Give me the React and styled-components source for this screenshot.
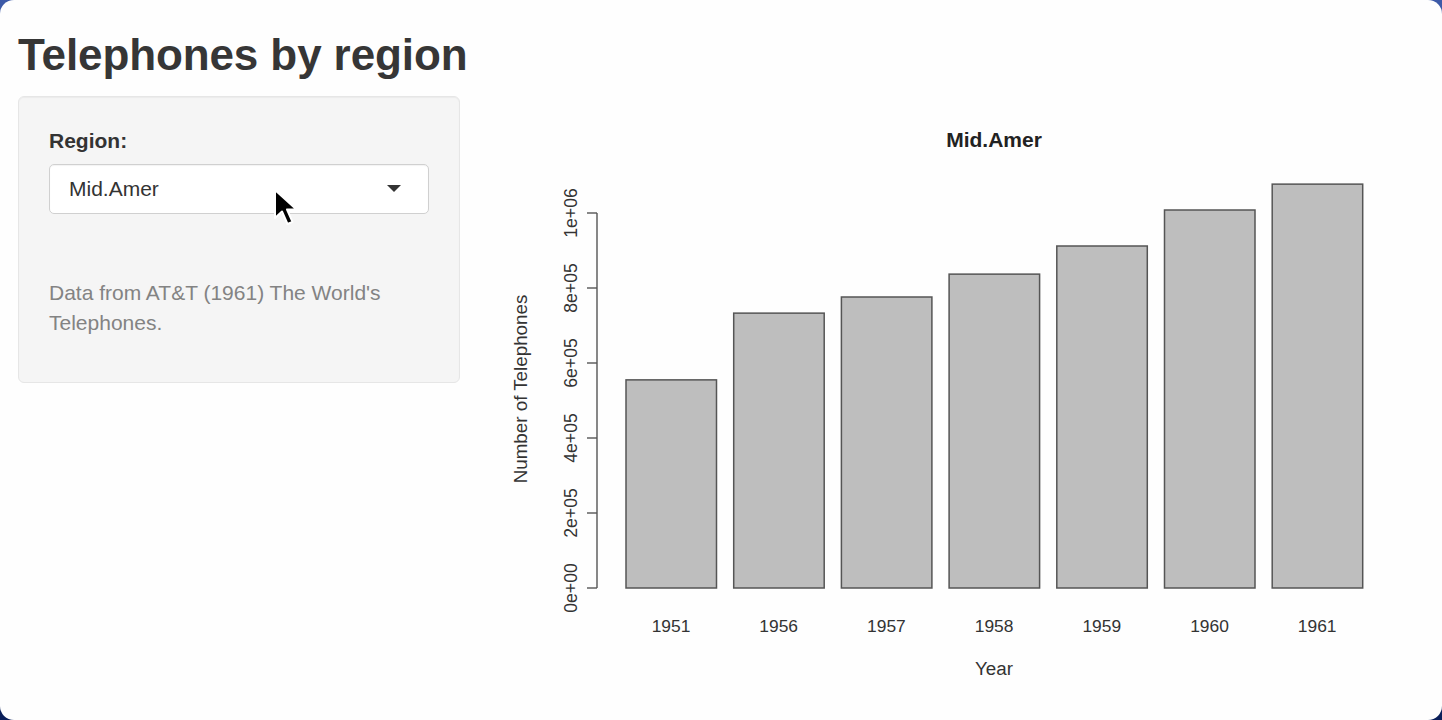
import React from "react";
import styled, { createGlobalStyle } from "styled-components";

const GlobalStyle = createGlobalStyle`
  html, body {
    margin: 0;
    padding: 0;
    background: linear-gradient(180deg, #3d5aa8 0%, #16306f 60%, #0a1f5a 100%);
  }
  body {
    font-family: "Liberation Sans", Arial, sans-serif;
    color: #333;
  }
`;

const Window = styled.div`
  width: 1442px;
  height: 720px;
  box-sizing: border-box;
  background: #fefefe;
  border-radius: 14px;
  padding: 30px 0 0 18px;
  position: relative;
  overflow: hidden;
`;

const Title = styled.h1`
  margin: 0;
  font-size: 44px;
  line-height: 50px;
  font-weight: bold;
  color: #363636;
  letter-spacing: -0.1px;
`;

const Row = styled.div`
  display: flex;
  align-items: flex-start;
  margin-top: 16px;
  gap: 20px;
`;

const Well = styled.div`
  width: 442px;
  height: 287px;
  box-sizing: border-box;
  padding: 29px 30px;
  background: #f5f5f5;
  border: 1px solid #e6e6e6;
  border-radius: 6px;
  box-shadow: inset 0 1px 1px rgba(0, 0, 0, 0.04);
`;

const Label = styled.label`
  display: block;
  font-size: 21px;
  line-height: 30px;
  font-weight: bold;
  color: #333;
  margin-bottom: 8px;
`;

const Select = styled.div`
  height: 50px;
  box-sizing: border-box;
  border: 1px solid #d0d0d0;
  border-radius: 5px;
  background: #fff;
  box-shadow: inset 0 1px 1px rgba(0, 0, 0, 0.05);
  display: flex;
  align-items: center;
  justify-content: space-between;
  padding: 0 27px 0 19px;
  font-size: 21px;
  color: #333;
`;

const Caret = styled.span`
  width: 0;
  height: 0;
  border-left: 7px solid transparent;
  border-right: 7px solid transparent;
  border-top: 7px solid #333;
  margin-top: -2px;
`;

const Help = styled.p`
  margin: 64px 0 0;
  font-size: 21px;
  line-height: 30px;
  color: #838383;
`;

const Plot = styled.svg`
  display: block;
  width: 950px;
  height: 600px;
  font-family: "Liberation Sans", Arial, sans-serif;
`;

const Cursor = styled.svg`
  position: absolute;
  left: 272px;
  top: 188px;
  width: 32px;
  height: 44px;
`;

const data = [
  { year: "1951", value: 555 },
  { year: "1956", value: 733 },
  { year: "1957", value: 776 },
  { year: "1958", value: 837 },
  { year: "1959", value: 912 },
  { year: "1960", value: 1008 },
  { year: "1961", value: 1077 },
];

const y0 = 588;
const scale = 375 / 1000;
const ticks = ["0e+00", "2e+05", "4e+05", "6e+05", "8e+05", "1e+06"];

function Chart() {
  return (
    <Plot viewBox="480 96 950 600">
      <text x="994" y="147" textAnchor="middle" fontSize="21" fontWeight="bold" fill="#222">
        Mid.Amer
      </text>
      <line x1="597" y1="213" x2="597" y2={y0} stroke="#555" strokeWidth="1.4" />
      {ticks.map((t, i) => {
        const y = y0 - i * 75;
        return (
          <g key={t}>
            <line x1="587" y1={y} x2="597" y2={y} stroke="#555" strokeWidth="1.4" />
            <text
              x="577"
              y={y}
              textAnchor="middle"
              fontSize="17.6"
              fill="#333"
              transform={`rotate(-90 577 ${y})`}
            >
              {t}
            </text>
          </g>
        );
      })}
      <text
        x="527"
        y="389"
        textAnchor="middle"
        fontSize="18.8"
        fill="#333"
        transform="rotate(-90 527 389)"
      >
        Number of Telephones
      </text>
      {data.map((d, i) => {
        const x = 626 + i * 107.7;
        const h = d.value * scale;
        return (
          <g key={d.year}>
            <rect x={x} y={y0 - h} width="90.5" height={h} fill="#bebebe" stroke="#555" strokeWidth="1.5" />
            <text x={x + 45} y="632" textAnchor="middle" fontSize="17.4" fill="#333">
              {d.year}
            </text>
          </g>
        );
      })}
      <text x="994" y="675" textAnchor="middle" fontSize="18.8" fill="#333">
        Year
      </text>
    </Plot>
  );
}

export default function App() {
  return (
    <>
      <GlobalStyle />
      <Window>
        <Title>Telephones by region</Title>
        <Row>
          <Well>
            <Label>Region:</Label>
            <Select>
              <span>Mid.Amer</span>
              <Caret />
            </Select>
            <Help>Data from AT&amp;T (1961) The World's Telephones.</Help>
          </Well>
          <Chart />
        </Row>
        <Cursor viewBox="0 0 32 44">
          <path
            d="M3 2 L3 30 L10 23.5 L15.5 36 L20.5 33.8 L15 21.5 L24.5 21.5 Z"
            fill="#000"
            stroke="#fff"
            strokeWidth="2"
            strokeLinejoin="round"
          />
        </Cursor>
      </Window>
    </>
  );
}
